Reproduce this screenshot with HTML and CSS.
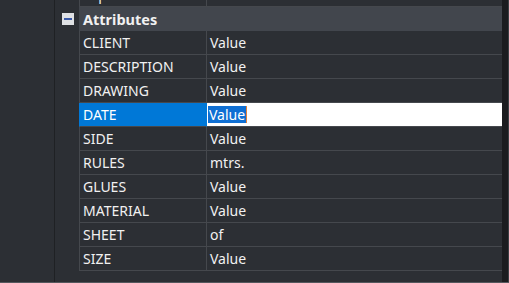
FILE: index.html
```html
<!DOCTYPE html>
<html>
<head>
<meta charset="utf-8">
<link rel="stylesheet" href="styles.css">
</head>
<body>
<div class="panel">
  <div class="gutter"></div>
  <div class="main">
    <div class="grid">
      <div class="row partial"><div class="exp"></div><div class="name">Explodable</div><div class="val">Yes</div></div>
      <div class="row header"><div class="exp"><span class="minus"></span></div><div class="hname">Attributes</div></div>
      <div class="row"><div class="exp"></div><div class="name">CLIENT</div><div class="val">Value</div></div>
      <div class="row"><div class="exp"></div><div class="name">DESCRIPTION</div><div class="val">Value</div></div>
      <div class="row"><div class="exp"></div><div class="name">DRAWING</div><div class="val">Value</div></div>
      <div class="row active"><div class="exp"></div><div class="name">DATE</div><div class="val"><span class="sel">Value</span><span class="caret"></span></div></div>
      <div class="row"><div class="exp"></div><div class="name">SIDE</div><div class="val">Value</div></div>
      <div class="row"><div class="exp"></div><div class="name">RULES</div><div class="val">mtrs.</div></div>
      <div class="row"><div class="exp"></div><div class="name">GLUES</div><div class="val">Value</div></div>
      <div class="row"><div class="exp"></div><div class="name">MATERIAL</div><div class="val">Value</div></div>
      <div class="row"><div class="exp"></div><div class="name">SHEET</div><div class="val">of</div></div>
      <div class="row"><div class="exp"></div><div class="name">SIZE</div><div class="val">Value</div></div>
    </div>
    <div class="scroll"></div>
  </div>
</div>
</body>
</html>
```
FILE: styles.css
```css
html, body {
  margin: 0;
  padding: 0;
  width: 509px;
  height: 283px;
  overflow: hidden;
  background: #2c2f34;
  font-family: "Noto Sans", "Open Sans", sans-serif;
  font-size: 14px;
  color: #f1f1f1;
}
.panel {
  display: flex;
  height: 282px;
  border-bottom: 1px solid #55585d;
}
.gutter {
  width: 54px;
  flex: none;
  border-right: 1px solid #1f2124;
}
.main {
  flex: 1;
  display: flex;
  overflow: hidden;
}
.grid {
  width: 447px;
  flex: none;
}
.row {
  display: grid;
  grid-template-columns: 24px 128px 1fr;
  height: 24px;
}
.row .exp {
  border-bottom: none;
}
.row .name {
  border-left: 1px solid #45484d;
  border-right: 1px solid #45484d;
  border-bottom: 1px solid #45484d;
  padding-left: 3px;
  line-height: 23px;
  white-space: nowrap;
  overflow: hidden;
}
.row .val {
  border-bottom: 1px solid #45484d;
  padding-left: 3px;
  line-height: 23px;
  white-space: nowrap;
}
.partial {
  margin-top: -17px;
}
.header .hname {
  grid-column: 2 / 4;
  background: #42464d;
  font-weight: bold;
  padding-left: 4px;
  line-height: 24px;
  font-size: 14.5px;
}
.header .exp {
  display: flex;
  align-items: center;
  justify-content: center;
  padding-left: 2px;
}
.minus {
  width: 12px;
  height: 12px;
  background: #dfe1e4;
  position: relative;
}
.minus::after {
  content: "";
  position: absolute;
  left: 2px;
  right: 2px;
  top: 5px;
  height: 2px;
  background: #3b5aa8;
}
.active .name {
  background: #0078d7;
  border-left-color: #0078d7;
  border-right-color: #0078d7;
  color: #ffffff;
}
.active .val {
  background: #ffffff;
  padding-left: 1px;
  display: flex;
  align-items: center;
}
.sel {
  background: #0f6fd3;
  color: #ffffff;
  line-height: 17px;
  padding: 0 1px;
}
.caret {
  width: 1px;
  height: 17px;
  background: #e0803a;
}
.scroll {
  width: 6px;
  flex: none;
  background: #1b1c1f;
  border-right: 1px solid #3d4045;
}
```
